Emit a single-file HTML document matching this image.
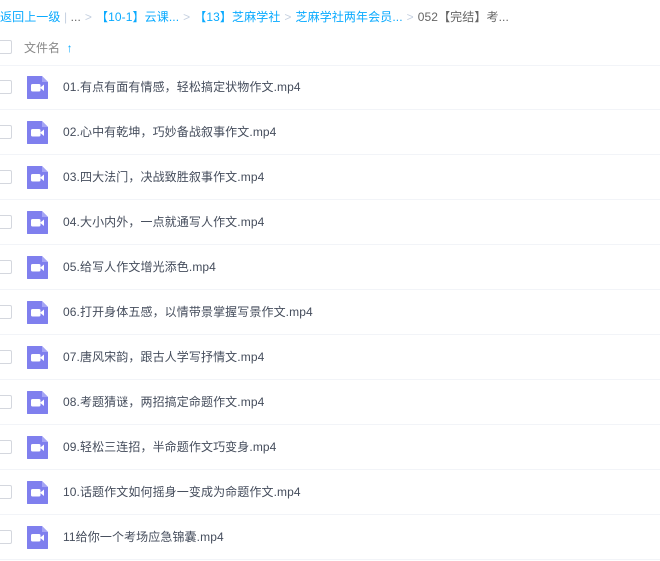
<!DOCTYPE html><html><head><meta charset="utf-8"><style>
body{margin:0;width:660px;height:561px;overflow:hidden;background:#fff;font-family:"Liberation Sans","Noto Sans CJK SC",sans-serif;font-size:12px;color:#454d5c}
.bc{position:absolute;top:9px;left:0;white-space:nowrap;color:#09aaff;font-size:12px;line-height:16px;letter-spacing:0.1px}
.bc .g{color:#c5d0e0;margin:0 4px}
.bc .d{color:#666}
.hd{position:absolute;top:37px;left:0;width:660px;height:28px;border-bottom:1px solid #f2f4f8}
.cb{position:absolute;left:-2px;width:12px;height:12px;border:1px solid #d4d7de;border-radius:2px;background:#fff}
.hd .t{position:absolute;left:24px;top:2px;color:#888;}
.row{position:absolute;left:0;width:660px;height:44px;border-bottom:1px solid #f2f4f8}
.ic{position:absolute;left:27px;top:11px;width:21px;height:23px}
.row .t{position:absolute;left:63px;top:15px;line-height:15px;letter-spacing:0.1px}
</style></head><body>
<div class="bc">返回上一级<span style="color:#c5d0e0"> | </span><span class="d">...</span><span class="g">&gt;</span>【10-1】云课...<span class="g">&gt;</span>【13】芝麻学社<span class="g">&gt;</span>芝麻学社两年会员...<span class="g">&gt;</span><span class="d">052【完结】考...</span></div>
<div class="hd"><div class="cb" style="top:3px"></div><div class="t">文件名 &nbsp;<span style="color:#09aaff;font-weight:bold">↑</span></div></div>
<div id="rows"></div>
<script>
var n=["01.有点有面有情感，轻松搞定状物作文.mp4","02.心中有乾坤，巧妙备战叙事作文.mp4","03.四大法门，决战致胜叙事作文.mp4","04.大小内外，一点就通写人作文.mp4","05.给写人作文增光添色.mp4","06.打开身体五感，以情带景掌握写景作文.mp4","07.唐风宋韵，跟古人学写抒情文.mp4","08.考题猜谜，两招搞定命题作文.mp4","09.轻松三连招，半命题作文巧变身.mp4","10.话题作文如何摇身一变成为命题作文.mp4","11给你一个考场应急锦囊.mp4"];
var h="";
n.forEach(function(s,i){h+='<div class="row" style="top:'+(65+45*i)+'px"><div class="cb" style="top:15px"></div><svg class="ic" viewBox="0 0 21 23"><path d="M0.5 0H15L21 6V22.5a0.5 0.5 0 0 1-0.5 0.5H0.5a0.5 0.5 0 0 1-0.5-0.5V0.5a0.5 0.5 0 0 1 0.5-0.5z" fill="#7f7fee"/><path d="M15 0V6H21z" fill="#a5a5f5"/><rect x="4" y="8" width="9.5" height="7.5" rx="1.5" fill="#fff"/><path d="M13 11.75L17 8.5V15z" fill="#fff"/></svg><div class="t">'+s+'</div></div>'});
document.getElementById("rows").innerHTML=h;
</script>
</body></html>
